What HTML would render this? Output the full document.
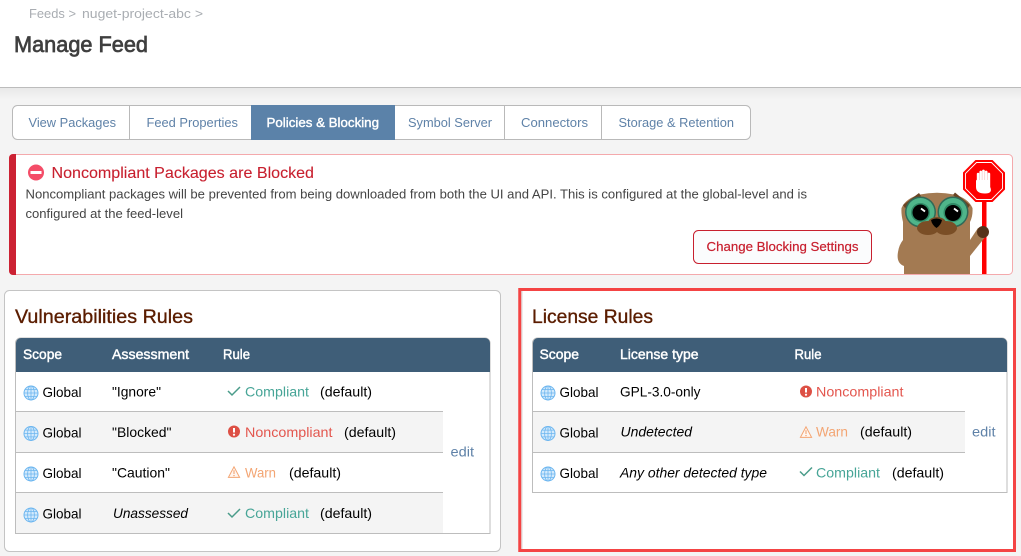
<!DOCTYPE html>
<html lang="en"><head><meta charset="utf-8"><title>Manage Feed</title>
<style>
html,body{margin:0;padding:0;width:1021px;height:556px;overflow:hidden;background:#f4f4f4}
svg{position:absolute;left:0;top:0;display:block}
text{font-family:"Liberation Sans",sans-serif;white-space:pre}
.g{fill:#000;font-size:14px}
.c{fill:#47a597;font-size:14px}
.n{fill:#e3564e;font-size:14px}
.w{fill:#f3a573;font-size:14px}
.l{fill:#5f82a8;font-size:14px}
.h{fill:#fff;stroke:#fff;stroke-width:.45px;font-size:14px}
.t{fill:#5b1d00;stroke:#5b1d00;stroke-width:.35px;font-size:19px}
</style></head><body>
<svg width="1021" height="556" viewBox="0 0 1021 556" xmlns="http://www.w3.org/2000/svg">
<defs>
<linearGradient id="sh" x1="0" y1="0" x2="0" y2="1"><stop offset="0" stop-color="#e8e8e8"/><stop offset="1" stop-color="#f4f4f4"/></linearGradient>
<g id="globe" fill="none" stroke="#6db6ef" stroke-width=".8"><circle cx="0" cy="0" r="7" fill="#d3eafc" stroke-width="1"/><ellipse cx="0" cy="0" rx="3.4" ry="7"/><path d="M0-7V7M-7 0H7M-6-3.4H6M-6 3.4H6"/></g>
<path id="chk" d="M0 5.500L4 9.500L12 1.500" fill="none" stroke="#4a9c8a" stroke-width="1.500"/>
<g id="exc"><circle cx="6" cy="6" r="6" fill="#dd5045"/><path d="M6 2.500V7" stroke="#fff" stroke-width="2"/><circle cx="6" cy="9.200" r="1.100" fill="#fff"/></g>
<g id="wrn"><path d="M6 .8L11.600 11.400H.4Z" fill="#fff6f0" stroke="#f3a573" stroke-width="1"/><path d="M6 4.200V8" stroke="#f3a573" stroke-width="1.100"/><circle cx="6" cy="9.600" r=".7" fill="#f3a573"/></g>
</defs>

<!-- header -->
<rect x="0" y="0" width="1021" height="87" fill="#fff"/>
<rect x="0" y="87" width="1021" height="1" fill="#bcbcbc"/>
<rect x="0" y="88" width="1021" height="12" fill="url(#sh)"/>
<text x="29" y="18" font-size="13" fill="#a9adb2" textLength="47" lengthAdjust="spacingAndGlyphs">Feeds &gt;</text>
<text x="82" y="18" font-size="13" fill="#a9adb2" textLength="121" lengthAdjust="spacingAndGlyphs">nuget-project-abc &gt;</text>
<text x="14" y="52" font-size="22" fill="#3f3f3f" stroke="#3f3f3f" stroke-width=".7" textLength="134" lengthAdjust="spacingAndGlyphs">Manage Feed</text>

<!-- tabs -->
<rect x="12.500" y="105.500" width="738" height="34" rx="5" fill="#fff" stroke="#b9b9b9"/>
<rect x="251" y="105" width="144" height="35" fill="#5b82a9"/>
<path d="M129.500 106V139M504.500 106V139M601.500 106V139" stroke="#b9b9b9"/>
<g font-size="13" fill="#5f82a8">
<text x="28.500" y="127" textLength="87.500" lengthAdjust="spacingAndGlyphs">View Packages</text>
<text x="146.500" y="127" textLength="91.500" lengthAdjust="spacingAndGlyphs">Feed Properties</text>
<text x="266.500" y="127" fill="#fff" stroke="#fff" stroke-width=".4" textLength="112.500" lengthAdjust="spacingAndGlyphs">Policies &amp; Blocking</text>
<text x="408" y="127" textLength="84" lengthAdjust="spacingAndGlyphs">Symbol Server</text>
<text x="521" y="127" textLength="67" lengthAdjust="spacingAndGlyphs">Connectors</text>
<text x="618.500" y="127" textLength="115.500" lengthAdjust="spacingAndGlyphs">Storage &amp; Retention</text>
</g>

<!-- alert -->
<rect x="9.500" y="154.500" width="1003" height="120" rx="4" fill="#fff" stroke="#f4a9ac"/>
<path d="M16 154H13a4 4 0 0 0-4 4V271a4 4 0 0 0 4 4H16Z" fill="#cc2233"/>
<circle cx="36" cy="172.500" r="8" fill="#f44d68"/><rect x="30.500" y="171" width="11" height="3" fill="#fff"/>
<text x="51.500" y="178" font-size="16" fill="#c8202f" stroke="#c8202f" stroke-width=".1" textLength="262.500" lengthAdjust="spacingAndGlyphs">Noncompliant Packages are Blocked</text>
<text x="25.500" y="198.500" font-size="13" fill="#444" textLength="781.500" lengthAdjust="spacingAndGlyphs">Noncompliant packages will be prevented from being downloaded from both the UI and API. This is configured at the global-level and is</text>
<text x="25.500" y="218" font-size="13" fill="#444" textLength="157.500" lengthAdjust="spacingAndGlyphs">configured at the feed-level</text>
<rect x="693.500" y="230.500" width="178" height="33" rx="5" fill="#fbfcfd" stroke="#c8202f"/>
<text x="706.500" y="251" font-size="13" fill="#c8202f" stroke="#c8202f" stroke-width=".2" textLength="152" lengthAdjust="spacingAndGlyphs">Change Blocking Settings</text>

<!-- mascot -->
<g>
<rect x="982" y="198" width="4.500" height="76" fill="#f00"/>
<path d="M968 243L978 228L986 236L970 256Z" fill="#a37a52"/>
<path d="M904 274V266Q896 263 898 252Q899 245 903 240V222Q901 214 901.500 208Q906 198 920 194.500Q937 191 954 194.500Q968 198 972.500 208Q973 216 970 222V274Z" fill="#a37a52"/>
<ellipse cx="983" cy="232" rx="6" ry="6" fill="#55331a"/>
<path d="M903 205L919 193L921 196L905 208ZM953 195L955 192.500L970 205L968 208Z" fill="#6a4424"/>
<circle cx="920.500" cy="212" r="15.500" fill="#2f6a58"/><circle cx="953" cy="212" r="15.500" fill="#2f6a58"/>
<circle cx="920.500" cy="212" r="14" fill="#4fb58a"/><circle cx="953" cy="212" r="14" fill="#4fb58a"/>
<circle cx="920.500" cy="212.500" r="9.500" fill="#2f8a66"/><circle cx="953" cy="212.500" r="9.500" fill="#2f8a66"/>
<circle cx="920.500" cy="212.500" r="8" fill="#000"/><circle cx="953" cy="213" r="8" fill="#000"/>
<path d="M921 208.500L925 211.500M954 208.500L958 211.500" stroke="#fff" stroke-width="1.800"/>
<ellipse cx="928" cy="228" rx="11" ry="7" fill="#7a4e26"/><ellipse cx="946" cy="228" rx="11" ry="7" fill="#7a4e26"/>
<ellipse cx="937" cy="223" rx="9" ry="6" fill="#7a4e26"/>
<path d="M931 220Q936.500 217 942 220Q941 225 936.500 228Q932 225 931 220Z" fill="#000"/>
<path d="M975.500 160H992.500L1005 172.500V189.500L992.500 202H975.500L963 189.500V172.500Z" fill="#f00"/>
<path d="M976.500 162.500H991.500L1002.500 173.500V188.500L991.500 199.500H976.500L965.500 188.500V173.500Z" fill="none" stroke="#fff" stroke-width=".9"/>
<path d="M976 181a1.300 1.300 0 0 1 .8-1.200V174a1.300 1.300 0 0 1 2.600 0V172a1.300 1.300 0 0 1 2.700 0V171a1.300 1.300 0 0 1 2.700 0V172a1.300 1.300 0 0 1 2.700 0V174a1.300 1.300 0 0 1 2.700 0V187Q993 193.500 985 193.500Q976 193.500 976 187Z" fill="#fff"/>
<path d="M979.400 173V180M982.100 171V180M984.800 171V180M987.500 172V180" stroke="#f7b0b0" stroke-width=".5"/>
</g>

<!-- left panel -->
<rect x="4.500" y="290.500" width="496" height="261" rx="5" fill="#fff" stroke="#c4c4c4"/>
<text class="t" x="15" y="323" textLength="178" lengthAdjust="spacingAndGlyphs">Vulnerabilities Rules</text>
<path d="M15.500 533.500V343a5 5 0 0 1 5-5H485a5 5 0 0 1 5 5V533.500Z" fill="#fff" stroke="#bdbdbd"/>
<path d="M16 372V343a5 5 0 0 1 5-5H485a5 5 0 0 1 5 5V372Z" fill="#3f5e78"/>
<rect x="16" y="412" width="427" height="41" fill="#f4f4f4"/>
<rect x="16" y="493" width="427" height="40" fill="#f4f4f4"/>
<path d="M16 411.500H443M16 452.500H443M16 492.500H443" stroke="#bdbdbd"/>
<text class="h" x="23" y="359" textLength="39" lengthAdjust="spacingAndGlyphs">Scope</text>
<text class="h" x="112" y="359" textLength="77" lengthAdjust="spacingAndGlyphs">Assessment</text>
<text class="h" x="223" y="359" textLength="27" lengthAdjust="spacingAndGlyphs">Rule</text>
<use href="#globe" x="31" y="393"/><use href="#globe" x="31" y="433.500"/><use href="#globe" x="31" y="474"/><use href="#globe" x="31" y="515"/>
<text class="g" x="42.500" y="397" textLength="39" lengthAdjust="spacingAndGlyphs">Global</text>
<text class="g" x="42.500" y="437.500" textLength="39" lengthAdjust="spacingAndGlyphs">Global</text>
<text class="g" x="42.500" y="478" textLength="39" lengthAdjust="spacingAndGlyphs">Global</text>
<text class="g" x="42.500" y="518.500" textLength="39" lengthAdjust="spacingAndGlyphs">Global</text>
<text class="g" x="112" y="396.500" textLength="49" lengthAdjust="spacingAndGlyphs">"Ignore"</text>
<text class="g" x="112" y="437" textLength="59.500" lengthAdjust="spacingAndGlyphs">"Blocked"</text>
<text class="g" x="112" y="477.500" textLength="58" lengthAdjust="spacingAndGlyphs">"Caution"</text>
<text class="g" x="113" y="518" font-style="italic" textLength="75" lengthAdjust="spacingAndGlyphs">Unassessed</text>
<use href="#chk" x="228" y="385.500"/><use href="#exc" x="228" y="425.500"/><use href="#wrn" x="228" y="466"/><use href="#chk" x="228" y="507.500"/>
<text class="c" x="245" y="396.500" textLength="64" lengthAdjust="spacingAndGlyphs">Compliant</text>
<text class="g" x="320" y="396.500" textLength="52" lengthAdjust="spacingAndGlyphs">(default)</text>
<text class="n" x="245" y="437" textLength="87.500" lengthAdjust="spacingAndGlyphs">Noncompliant</text>
<text class="g" x="344" y="437" textLength="52" lengthAdjust="spacingAndGlyphs">(default)</text>
<text class="w" x="245" y="477.500" textLength="31" lengthAdjust="spacingAndGlyphs">Warn</text>
<text class="g" x="289" y="477.500" textLength="52" lengthAdjust="spacingAndGlyphs">(default)</text>
<text class="c" x="245" y="518" textLength="64" lengthAdjust="spacingAndGlyphs">Compliant</text>
<text class="g" x="320" y="518" textLength="52" lengthAdjust="spacingAndGlyphs">(default)</text>
<text class="l" x="450.500" y="456.500" textLength="23.500" lengthAdjust="spacingAndGlyphs">edit</text>

<!-- right panel -->
<rect x="519.750" y="289.500" width="494.750" height="261" fill="#fff" stroke="#f44444" stroke-width="3"/>
<rect x="521.500" y="291" width="1" height="258" fill="#d8d8d8"/>
<text class="t" x="532" y="323" textLength="121" lengthAdjust="spacingAndGlyphs">License Rules</text>
<path d="M532.500 492.500V343a5 5 0 0 1 5-5H1002a5 5 0 0 1 5 5V492.500Z" fill="#fff" stroke="#bdbdbd"/>
<path d="M533 372V343a5 5 0 0 1 5-5H1002a5 5 0 0 1 5 5V372Z" fill="#3f5e78"/>
<rect x="533" y="412" width="432" height="41" fill="#f4f4f4"/>
<path d="M533 411.500H965M533 452.500H965" stroke="#bdbdbd"/>
<text class="h" x="539.500" y="359" textLength="39.500" lengthAdjust="spacingAndGlyphs">Scope</text>
<text class="h" x="620" y="359" textLength="78.500" lengthAdjust="spacingAndGlyphs">License type</text>
<text class="h" x="794.500" y="359" textLength="27" lengthAdjust="spacingAndGlyphs">Rule</text>
<use href="#globe" x="548" y="393"/><use href="#globe" x="548" y="433.500"/><use href="#globe" x="548" y="474"/>
<text class="g" x="559.500" y="397" textLength="39" lengthAdjust="spacingAndGlyphs">Global</text>
<text class="g" x="559.500" y="437.500" textLength="39" lengthAdjust="spacingAndGlyphs">Global</text>
<text class="g" x="559.500" y="478" textLength="39" lengthAdjust="spacingAndGlyphs">Global</text>
<text class="g" x="620" y="396.500" textLength="80.500" lengthAdjust="spacingAndGlyphs">GPL-3.0-only</text>
<text class="g" x="620.500" y="436.500" font-style="italic" textLength="71.500" lengthAdjust="spacingAndGlyphs">Undetected</text>
<text class="g" x="620" y="477.500" font-style="italic" textLength="147" lengthAdjust="spacingAndGlyphs">Any other detected type</text>
<use href="#exc" x="800" y="385.500"/><use href="#wrn" x="800" y="426"/><use href="#chk" x="800" y="466"/>
<text class="n" x="816" y="396.500" textLength="87.500" lengthAdjust="spacingAndGlyphs">Noncompliant</text>
<text class="w" x="816" y="436.500" textLength="32" lengthAdjust="spacingAndGlyphs">Warn</text>
<text class="g" x="860" y="436.500" textLength="52" lengthAdjust="spacingAndGlyphs">(default)</text>
<text class="c" x="816" y="477.500" textLength="64" lengthAdjust="spacingAndGlyphs">Compliant</text>
<text class="g" x="892" y="477.500" textLength="52" lengthAdjust="spacingAndGlyphs">(default)</text>
<text class="l" x="972" y="436.500" textLength="23.500" lengthAdjust="spacingAndGlyphs">edit</text>
</svg>
</body></html>
